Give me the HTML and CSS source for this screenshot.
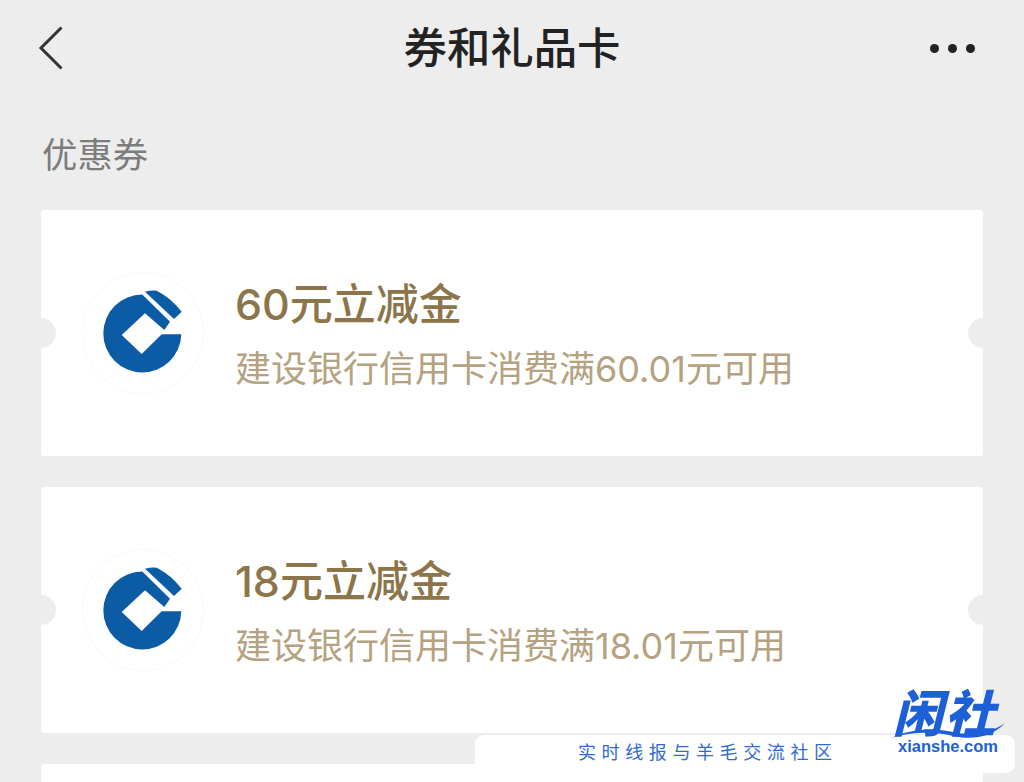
FILE: index.html
```html
<!DOCTYPE html>
<html lang="zh-CN">
<head>
<meta charset="utf-8">
<title>券和礼品卡</title>
<link rel="stylesheet" href="styles.css">
</head>
<body>
<div class="page">
  <header class="nav">
    <svg class="back" width="26" height="44" viewBox="0 0 26 44"><path d="M23.5 1.5 L3 22 L23.5 42.5" fill="none" stroke="#333" stroke-width="3"/></svg>
    <h1 class="title">券和礼品卡</h1>
    <div class="more"><i></i><i></i><i></i></div>
  </header>
  <div class="section">优惠券</div>
  <div class="list">
    <article class="card">
      <div class="avatar">
        <svg width="120" height="120" viewBox="0 0 120 120"><path d="M59.3 21.5 L87 48.7 L81.3 57 L62 40.3 L38.7 62 L58.7 81 L78.7 61.3 L98.3 61.3 A39 39 0 1 1 59.3 21.5 Z" fill="#0b5ca5"/><path d="M62 18.7 Q68 17 73.7 17.7 Q88 25 98.7 38.7 L91 46 Z" fill="#0b5ca5"/></svg>
      </div>
      <div class="info">
        <div class="name">60元立减金</div>
        <div class="desc">建设银行信用卡消费满60.01元可用</div>
      </div>
    </article>
    <article class="card">
      <div class="avatar">
        <svg width="120" height="120" viewBox="0 0 120 120"><path d="M59.3 21.5 L87 48.7 L81.3 57 L62 40.3 L38.7 62 L58.7 81 L78.7 61.3 L98.3 61.3 A39 39 0 1 1 59.3 21.5 Z" fill="#0b5ca5"/><path d="M62 18.7 Q68 17 73.7 17.7 Q88 25 98.7 38.7 L91 46 Z" fill="#0b5ca5"/></svg>
      </div>
      <div class="info">
        <div class="name">18元立减金</div>
        <div class="desc">建设银行信用卡消费满18.01元可用</div>
      </div>
    </article>
    <article class="card"></article>
  </div>
  <div class="wm-bar">实时线报与羊毛交流社区</div>
  <div class="wm-logo">
    <div class="wm-cn">闲社</div>
    <svg class="wm-wave" width="114" height="16" viewBox="0 0 114 16"><path d="M0 15 C22 5 44 5 62 9 C80 13 98 11 114 0 C100 15 80 17 62 13 C44 9 22 8 0 15 Z" fill="#1d5fd6"/></svg>
    <div class="wm-en">xianshe.com</div>
  </div>
</div>
</body>
</html>
```
FILE: styles.css
```css
* { box-sizing: border-box; }
html, body { margin: 0; padding: 0; }
body { background: #ededed; font-family: Inter, "Noto Sans CJK SC", sans-serif; }
.page { position: relative; width: 1024px; height: 782px; overflow: hidden; }
.nav { height: 96px; padding: 0 49px; display: grid; grid-template-columns: 1fr auto 1fr; align-items: center; }
.back { display: block; margin-left: -11px; }
.title { margin: 0; font-size: 43.4px; font-weight: 500; line-height: 96px; color: #222; }
.more { display: flex; gap: 8.5px; justify-self: end; margin-top: 1px; }
.more i { width: 9.5px; height: 9.5px; border-radius: 50%; background: #222; }
.section { padding: 34px 0 0 42px; height: 114px; font-size: 35.4px; line-height: 52px; color: #7c7c7c; }
.list { display: flex; flex-direction: column; gap: 31px; padding: 0 41px; }
.card { position: relative; flex: none; height: 246px; background: #fff; border-radius: 3px; display: flex; align-items: center; padding-left: 42px; gap: 32px; }
.card::before, .card::after { content: ""; position: absolute; top: 108px; width: 30px; height: 30px; border-radius: 50%; background: #ededed; }
.card::before { left: -15px; }
.card::after { right: -15px; }
.avatar { width: 120px; height: 120px; border-radius: 50%; background: #fff; box-shadow: 0 0 2px #ececec; }
.avatar svg { display: block; }
.info { display: flex; flex-direction: column; padding-top: 6px; }
.name { font-size: 43px; font-weight: 500; line-height: 62px; color: #8c7549; }
.desc { font-size: 36px; line-height: 62px; color: #b5a280; margin-top: 3px; }
.wm-bar { position: absolute; left: 475px; top: 735px; width: 540px; height: 38px; border-radius: 9px; background: #fff; padding-left: 103px; font-size: 18px; line-height: 36px; letter-spacing: 5.6px; color: #2f6bd0; white-space: nowrap; }
.wm-logo { position: absolute; left: 890px; top: 691px; width: 116px; display: flex; flex-direction: column; align-items: center; }
.wm-cn { font-size: 50px; line-height: 46px; font-weight: 900; font-style: italic; color: #1d5fd6; letter-spacing: 2px; margin-right: 6px; }
.wm-wave { display: block; margin-top: -14px; }
.wm-en { font-family: "Liberation Sans", sans-serif; font-size: 16.5px; line-height: 14px; font-weight: 700; color: #1d5fd6; }
```
